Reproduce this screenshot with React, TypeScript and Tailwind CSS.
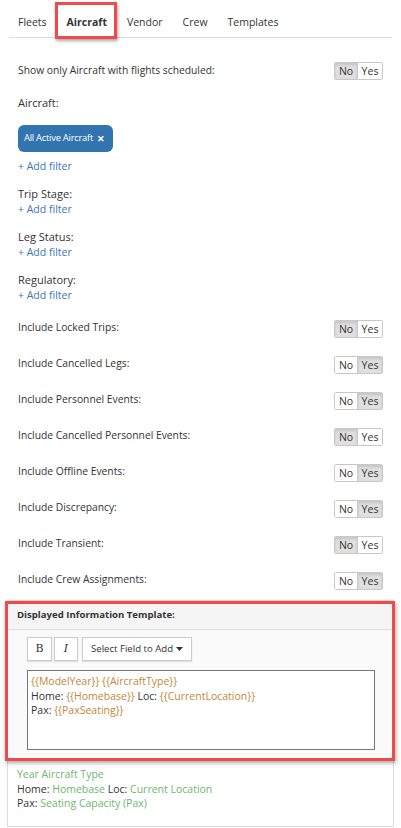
const tabs = ["Fleets", "Aircraft", "Vendor", "Crew", "Templates"];

const toggles: { label: string; yes: boolean }[] = [
  { label: "Include Locked Trips:", yes: false },
  { label: "Include Cancelled Legs:", yes: true },
  { label: "Include Personnel Events:", yes: true },
  { label: "Include Cancelled Personnel Events:", yes: false },
  { label: "Include Offline Events:", yes: true },
  { label: "Include Discrepancy:", yes: true },
  { label: "Include Transient:", yes: false },
  { label: "Include Crew Assignments:", yes: true },
];

function YesNo({ yes }: { yes: boolean }) {
  const on = "bg-[#e0e0e0] shadow-[inset_0_2px_3px_rgba(0,0,0,0.12)]";
  return (
    <div className="flex h-[18px] rounded-[2px] border border-[#c8c8c8] text-[10.5px] leading-none text-[#333] overflow-hidden">
      <span className={`w-[23px] flex items-center justify-center border-r border-[#c8c8c8] ${yes ? "bg-white" : on}`}>
        No
      </span>
      <span className={`w-[24px] flex items-center justify-center ${yes ? on : "bg-white"}`}>
        Yes
      </span>
    </div>
  );
}

function AddFilter() {
  return <div className="text-[10.5px] text-[#3a78b5] leading-[14px]">+ Add filter</div>;
}

function Var({ children }: { children: React.ReactNode }) {
  return <span className="text-[#c2883a]">{children}</span>;
}

function Out({ children }: { children: React.ReactNode }) {
  return <span className="text-[#6cb86c]">{children}</span>;
}

export default function App() {
  return (
    <div className="w-[401px] min-h-[828px] bg-white font-['Open_Sans',sans-serif] text-[#333]">
      {/* Tabs */}
      <div className="px-[9px]">
        <div className="flex h-[38px] border-b border-[#ddd] items-center text-[10.5px]">
          {tabs.map((t, i) => (
            <div
              key={t}
              className={`relative pt-[8px] ${i === 0 ? "pl-[9px] pr-[10px]" : "px-[10px]"} ${
                t === "Aircraft" ? "font-bold" : ""
              }`}
            >
              {t}
              {t === "Aircraft" && (
                <div className="absolute -left-[2px] right-0 -top-[5px] -bottom-[9px] border-[3px] border-[#f04a4a] shadow-[1px_2px_3px_rgba(0,0,0,0.35)]" />
              )}
            </div>
          ))}
        </div>
      </div>

      {/* Filters */}
      <div className="px-[18px] pt-[24px]">
        <div className="flex items-center justify-between h-[18px] text-[10.3px]">
          <span>Show only Aircraft with flights scheduled:</span>
          <YesNo yes={false} />
        </div>

        <div className="mt-[15px] text-[11px] leading-[16px]">Aircraft:</div>
        <div className="mt-[14px] inline-flex items-center gap-[4px] h-[27px] pl-[6px] pr-[8px] rounded-[6px] bg-[#3174b0] text-white text-[9.4px] tracking-[-0.25px]">
          All Active Aircraft
          <span className="font-bold text-[9px]">✕</span>
        </div>
        <div className="mt-[7px]">
          <AddFilter />
        </div>

        {["Trip Stage:", "Leg Status:", "Regulatory:"].map((l) => (
          <div key={l} className="mt-[13px]">
            <div className="text-[11px] leading-[16px]">{l}</div>
            <AddFilter />
          </div>
        ))}

        <div className="mt-[18px] flex flex-col gap-[18px]">
          {toggles.map((t) => (
            <div key={t.label} className="flex items-center justify-between h-[18px] text-[10.3px]">
              <span className="-mt-[3px]">{t.label}</span>
              <YesNo yes={t.yes} />
            </div>
          ))}
        </div>
      </div>

      {/* Template panel */}
      <div className="mx-[7px] mt-[10px] border border-[#ddd]">
        <div className="relative">
          <div className="bg-[#f5f5f5] border-b border-[#ddd] h-[29px] flex items-center px-[9px] text-[9.6px] font-bold">
            Displayed Information Template:
          </div>
          <div className="bg-[#fafafa] pl-[19px] pr-[18px] pt-[7px] pb-[9px]">
            <div className="flex gap-[2px] h-[24px]">
              <button className="w-[25px] border border-[#ccc] bg-white text-[11px] font-['DejaVu_Serif',serif] shadow-[0_1px_1px_rgba(0,0,0,0.1)]">
                B
              </button>
              <button className="w-[24px] border border-[#ccc] bg-white text-[11px] italic font-['DejaVu_Serif',serif] shadow-[0_1px_1px_rgba(0,0,0,0.1)]">
                I
              </button>
              <button className="ml-[2px] px-[8px] flex items-center gap-[2px] border border-[#ccc] bg-white text-[9.6px] shadow-[0_1px_1px_rgba(0,0,0,0.1)]">
                Select Field to Add
                <svg width="7" height="4" viewBox="0 0 7 4" className="ml-[1px]">
                  <path d="M0 0h7L3.5 4z" fill="#333" />
                </svg>
              </button>
            </div>
            <div className="mt-[9px] h-[80px] w-[348px] border border-[#777] bg-white px-[3px] pt-[3px] text-[10.5px] leading-[14.5px] text-[#333]">
              <div>
                <Var>{"{{ModelYear}}"}</Var> <Var>{"{{AircraftType}}"}</Var>
              </div>
              <div>
                Home: <Var>{"{{Homebase}}"}</Var> Loc: <Var>{"{{CurrentLocation}}"}</Var>
              </div>
              <div>
                Pax: <Var>{"{{PaxSeating}}"}</Var>
              </div>
            </div>
          </div>
          <div className="absolute -left-[3px] -right-[2px] top-0 -bottom-[2px] border-[3px] border-[#f04a4a] shadow-[1px_2px_4px_rgba(0,0,0,0.35)] pointer-events-none" />
        </div>
        <div className="px-[9px] pt-[8px] pb-[15px] text-[10.5px] leading-[14.5px] text-[#333]">
          <div>
            <Out>Year Aircraft Type</Out>
          </div>
          <div>
            Home: <Out>Homebase</Out> Loc: <Out>Current Location</Out>
          </div>
          <div>
            Pax: <Out>Seating Capacity (Pax)</Out>
          </div>
        </div>
      </div>
    </div>
  );
}
